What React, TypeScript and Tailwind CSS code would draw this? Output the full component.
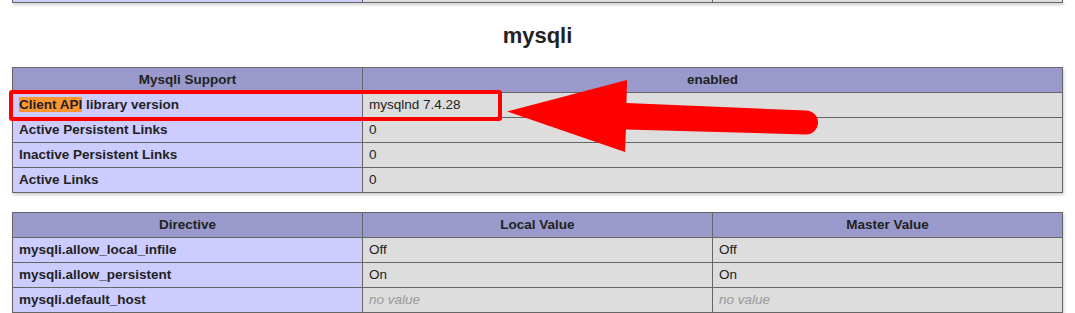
import React from 'react';

type Row = { name: React.ReactNode; values: React.ReactNode[] };

const cellBase = 'h-[25px] border-r border-b border-[#666666] flex items-center px-[6px] pt-[1px] whitespace-nowrap overflow-hidden';

const HeaderCell: React.FC<{ children: React.ReactNode }> = ({ children }) => (
  <div className={`${cellBase} justify-center bg-[#9999cc] font-bold`}>
    <span>{children}</span>
  </div>
);

const NameCell: React.FC<{ children: React.ReactNode }> = ({ children }) => (
  <div className={`${cellBase} bg-[#ccccff] font-bold`}>
    <span>{children}</span>
  </div>
);

const ValueCell: React.FC<{ children: React.ReactNode }> = ({ children }) => (
  <div className={`${cellBase} bg-[#dddddd]`}>
    <span>{children}</span>
  </div>
);

const NoValue = () => <i className="text-[#999999]">no value</i>;

const supportRows: Row[] = [
  {
    name: (
      <>
        <span className="bg-[#ff9632]">Client API</span> library version
      </>
    ),
    values: ['mysqlnd 7.4.28'],
  },
  { name: 'Active Persistent Links', values: ['0'] },
  { name: 'Inactive Persistent Links', values: ['0'] },
  { name: 'Active Links', values: ['0'] },
];

const directiveRows: Row[] = [
  { name: 'mysqli.allow_local_infile', values: ['Off', 'Off'] },
  { name: 'mysqli.allow_persistent', values: ['On', 'On'] },
  { name: 'mysqli.default_host', values: [<NoValue key="a" />, <NoValue key="b" />] },
];

export default function App() {
  return (
    <div
      className="relative w-[1075px] h-[313px] overflow-hidden bg-white text-[#222222] text-[13.5px]"
      style={{ fontFamily: '"Liberation Sans", Arial, sans-serif' }}
    >
      {/* tail of the previous table */}
      <div className="ml-[12px] w-[1051px] grid grid-cols-[350px_350px_350px] border-l border-[#666666] shadow-[1px_2px_3px_#cccccc]">
        <div className="h-[3px] border-r border-b border-[#666666] bg-[#ccccff]" />
        <div className="h-[3px] border-r border-b border-[#666666] bg-[#dddddd]" />
        <div className="h-[3px] border-r border-b border-[#666666] bg-[#dddddd]" />
      </div>

      <h2 className="h-[64px] pt-[20px] text-center text-[22px] leading-[25px] font-bold">mysqli</h2>

      <div className="ml-[12px] w-[1051px] grid grid-cols-[350px_700px] border-l border-t border-[#666666] shadow-[1px_2px_3px_#cccccc]">
        <HeaderCell>Mysqli Support</HeaderCell>
        <HeaderCell>enabled</HeaderCell>
        {supportRows.map((row, i) => (
          <React.Fragment key={i}>
            <NameCell>{row.name}</NameCell>
            <ValueCell>{row.values[0]}</ValueCell>
          </React.Fragment>
        ))}
      </div>

      <div className="mt-[19px] ml-[12px] w-[1051px] grid grid-cols-[350px_350px_350px] border-l border-t border-[#666666] shadow-[1px_2px_3px_#cccccc]">
        <HeaderCell>Directive</HeaderCell>
        <HeaderCell>Local Value</HeaderCell>
        <HeaderCell>Master Value</HeaderCell>
        {directiveRows.map((row, i) => (
          <React.Fragment key={i}>
            <NameCell>{row.name}</NameCell>
            <ValueCell>{row.values[0]}</ValueCell>
            <ValueCell>{row.values[1]}</ValueCell>
          </React.Fragment>
        ))}
      </div>

      {/* annotation: box + arrow */}
      <div className="absolute left-[9px] top-[90px] w-[493px] h-[31px] border-[4px] border-[#ff0000] rounded-[3px] pointer-events-none" />
      <svg className="absolute left-0 top-0 pointer-events-none" width="1075" height="313" viewBox="0 0 1075 313">
        <path
          d="M507 111.5 L627 80 L626.5 103 L806 110.5 A12 12 0 0 1 806 134.5 L626 129.5 L625 152 Z"
          fill="#ff0000"
        />
      </svg>
    </div>
  );
}
